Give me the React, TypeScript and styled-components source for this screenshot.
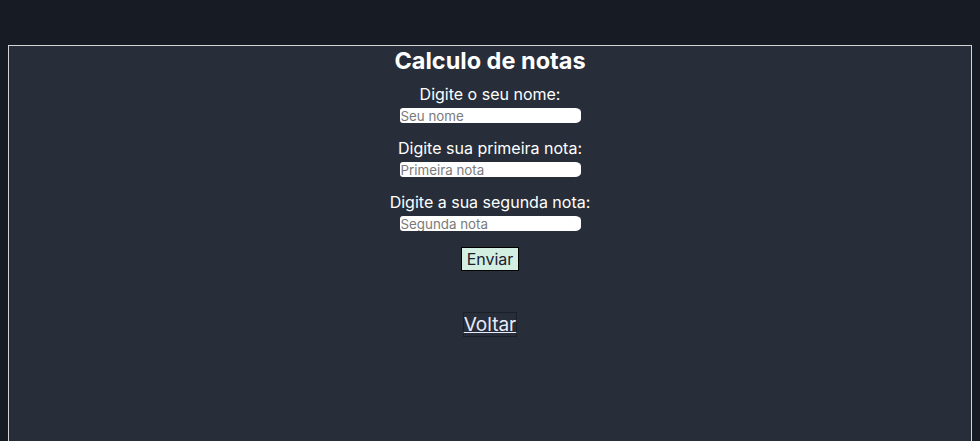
import React from "react";
import styled, { createGlobalStyle } from "styled-components";

const Global = createGlobalStyle`
  html, body { background: #171b24; }
  body {
    margin: 8px;
    padding-top: 37px;
    font-family: Inter, "Noto Sans", sans-serif;
    color: #ffffff;
  }
`;

const Panel = styled.main`
  border: 1px solid #d4d4d4;
  background: #272e3a;
  min-height: 420px;
  display: flex;
  flex-direction: column;
  align-items: center;
`;

const Title = styled.h2`
  margin: 0;
  font-size: 23.5px;
  font-weight: 700;
  line-height: 29px;
  color: #ffffff;
`;

const Form = styled.form`
  display: flex;
  flex-direction: column;
  align-items: center;
  margin-top: 10px;
`;

const Field = styled.div`
  display: flex;
  flex-direction: column;
  align-items: center;
  gap: 4px;
  margin-bottom: 16px;
`;

const Label = styled.label`
  font-size: 16px;
  line-height: 19px;
  color: #ffffff;
`;

const Input = styled.input`
  box-sizing: border-box;
  width: 181px;
  height: 15px;
  border: none;
  border-radius: 3px 6px 6px 3px / 3px 4px 4px 3px;
  background: #ffffff;
  padding: 0 1px;
  font-family: Inter, "Noto Sans", sans-serif;
  font-size: 13.33px;
  color: #222;
  outline: none;
  &::placeholder { color: #7a7a7a; }
`;

const SubmitButton = styled.button`
  font-family: Inter, "Noto Sans", sans-serif;
  font-size: 16px;
  line-height: 20px;
  padding: 1px 5px;
  background: #d3efe1;
  color: #1b2030;
  border: 1px solid #000;
  border-radius: 0;
`;

const BackLink = styled.a`
  margin-top: 41px;
  font-size: 19px;
  line-height: 23px;
  padding: 0;
  color: #e8ecfa;
  text-decoration: underline;
  border: 1px solid #1a1f28;
`;

export default function App() {
  return (
    <>
      <Global />
      <Panel>
        <Title>Calculo de notas</Title>
        <Form onSubmit={(e) => e.preventDefault()}>
          <Field>
            <Label htmlFor="nome">Digite o seu nome:</Label>
            <Input id="nome" placeholder="Seu nome" />
          </Field>
          <Field>
            <Label htmlFor="n1">Digite sua primeira nota:</Label>
            <Input id="n1" placeholder="Primeira nota" />
          </Field>
          <Field>
            <Label htmlFor="n2">Digite a sua segunda nota:</Label>
            <Input id="n2" placeholder="Segunda nota" />
          </Field>
          <SubmitButton type="submit">Enviar</SubmitButton>
        </Form>
        <BackLink href="#">Voltar</BackLink>
      </Panel>
    </>
  );
}
